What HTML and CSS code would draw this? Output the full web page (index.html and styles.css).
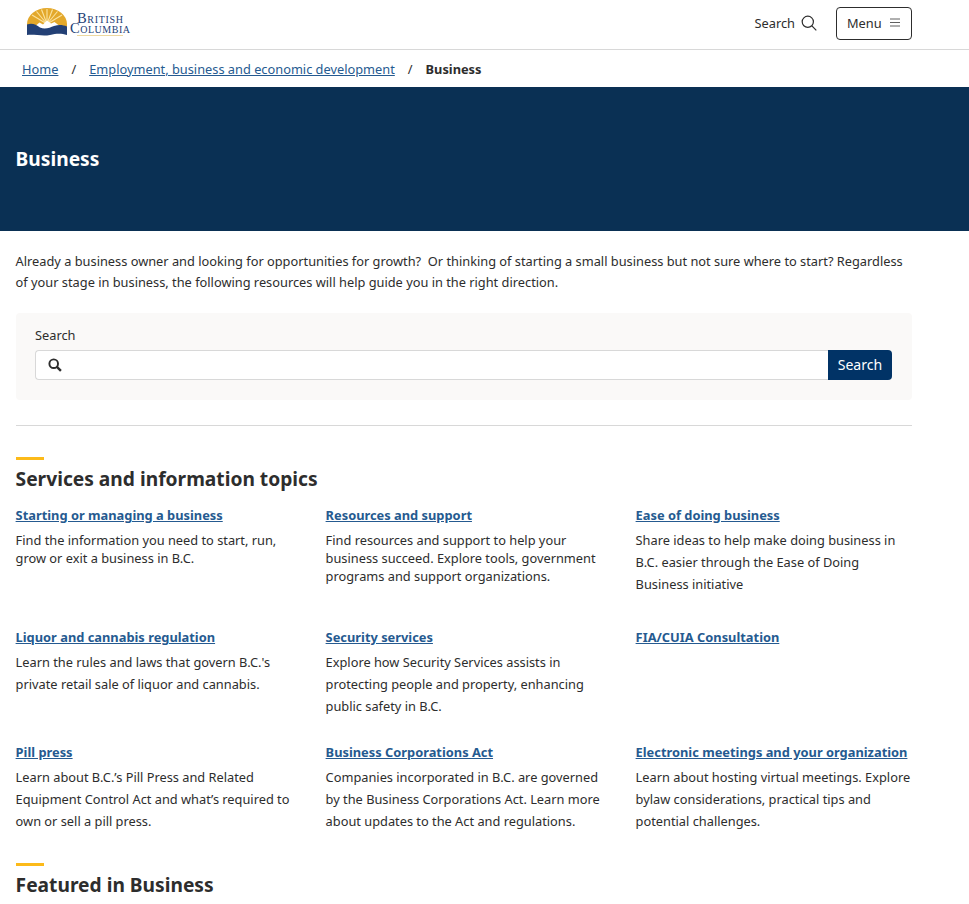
FILE: index.html
```html
<!DOCTYPE html>
<html lang="en">
<head>
  <meta charset="UTF-8" />
  <meta name="viewport" content="width=device-width, initial-scale=1.0"/>
  <title>Business</title>
  <link rel="stylesheet" href="styles.css">
</head>
<body>

<header class="site-header">
  <a class="logo" href="#">
    <svg width="106" height="30" viewBox="0 0 106 30">
      <path d="M1 17A20 16 0 0 1 41 17L41 20L1 20Z" fill="#e3a82b"/>
      <g stroke="#fbe3a0" stroke-width="1.100">
        <path d="M21 17L21 2"/><path d="M21 17L15.500 2.500"/><path d="M21 17L26.500 2.500"/>
        <path d="M21 17L10.500 4.500"/><path d="M21 17L31.500 4.500"/><path d="M21 17L6 8"/><path d="M21 17L36 8"/>
      </g>
      <path d="M8 20L13.500 15.500L17 17.500L21 13.500L25 16.500L28.500 15L35 20L28 22L14 22Z" fill="#fff"/>
      <path d="M1 17.500C6 15.500 10 17.500 14 20.500C19 23 24 20.500 28 19C33 17.500 37 18 41 19.500L41 28C35 26 30 26.500 24 28C16 29.500 8 27 1 28Z" fill="#234075"/>
      <text class="logo-text" x="51" y="15.500" textLength="46">British</text>
      <text class="logo-text" x="44" y="26" textLength="60">Columbia</text>
      <path d="M51 28.500H97" stroke="#eed9a0" stroke-width="1"/>
    </svg>
  </a>
  <div class="header-actions">
    <a class="header-search" href="#">Search
      <svg width="16" height="16" viewBox="0 0 16 16" fill="none" stroke="#2d2d2d" stroke-width="1.200">
        <circle cx="6.800" cy="6.800" r="5.600"/>
        <path d="M10.900 10.900L15.300 15.300"/>
      </svg>
    </a>
    <button class="menu-btn">Menu
      <svg width="10" height="9" viewBox="0 0 10 9" stroke="#606060" stroke-width="1">
        <path d="M0 1H10M0 4.500H10M0 8H10"/>
      </svg>
    </button>
  </div>
</header>

<nav class="breadcrumb">
  <a href="#">Home</a>
  <span class="sep">/</span>
  <a href="#">Employment, business and economic development</a>
  <span class="sep">/</span>
  <strong>Business</strong>
</nav>

<div class="hero">
  <h1>Business</h1>
</div>

<main class="content">
  <p class="intro">Already a business owner and looking for opportunities for growth?&nbsp; Or thinking of starting a small business but not sure where to start? Regardless of your stage in business, the following resources will help guide you in the right direction.</p>

  <form class="search-box">
    <label for="q">Search</label>
    <div class="search-row">
      <div class="search-input">
        <svg width="14" height="14" viewBox="0 0 13 13" fill="none" stroke="#2d2d2d">
          <circle cx="5.300" cy="5.300" r="4" stroke-width="1.800"/>
          <path d="M8.300 8.300L12 12" stroke-width="2.200"/>
        </svg>
        <input id="q" type="text">
      </div>
      <button type="button" class="search-btn">Search</button>
    </div>
  </form>

  <hr class="divider">

  <h2 class="section-title">Services and information topics</h2>

  <div class="topics">
    <div class="topic row-1">
      <a href="#">Starting or managing a business</a>
      <p class="tight">Find the information you need to start, run, grow or exit a business in B.C.</p>
    </div>
    <div class="topic row-1">
      <a href="#">Resources and support</a>
      <p class="tight">Find resources and support to help your business succeed. Explore tools, government programs and support organizations.</p>
    </div>
    <div class="topic row-1">
      <a href="#">Ease of doing business</a>
      <p>Share ideas to help make doing business in B.C. easier through the Ease of Doing Business initiative</p>
    </div>
    <div class="topic row-2">
      <a href="#">Liquor and cannabis regulation</a>
      <p>Learn the rules and laws that govern B.C.'s private retail sale of liquor and cannabis.</p>
    </div>
    <div class="topic row-2">
      <a href="#">Security services</a>
      <p>Explore how Security Services assists in protecting people and property, enhancing public safety in B.C.</p>
    </div>
    <div class="topic row-2">
      <a href="#">FIA/CUIA Consultation</a>
    </div>
    <div class="topic row-3">
      <a href="#">Pill press</a>
      <p>Learn about B.C.’s Pill Press and Related Equipment Control Act and what’s required to own or sell a pill press.</p>
    </div>
    <div class="topic row-3">
      <a href="#">Business Corporations Act</a>
      <p>Companies incorporated in B.C. are governed by the Business Corporations Act. Learn more about updates to the Act and regulations.</p>
    </div>
    <div class="topic row-3">
      <a href="#">Electronic meetings and your organization</a>
      <p>Learn about hosting virtual meetings. Explore bylaw considerations, practical tips and potential challenges.</p>
    </div>
  </div>

  <h2 class="section-title">Featured in Business</h2>
</main>

</body>
</html>
```

FILE: styles.css
```css
* {
  box-sizing: border-box;
}

body {
  margin: 0;
  font-family: "Noto Sans", sans-serif;
  font-size: 12.8px;
  color: #2d2d2d;
  background: #fff;
  overflow-x: hidden;
}

a {
  color: #255a90;
}

.site-header {
  height: 50px;
  width: 969px;
  padding: 7px 57px 0 26px;
  display: flex;
  justify-content: space-between;
  border-bottom: 1px solid #d8d8d8;
}

.logo {
  display: block;
  height: 30px;
  text-decoration: none;
}

.logo-text {
  font-family: "Liberation Serif", serif;
  font-size: 14.500px;
  font-variant: small-caps;
  fill: #234075;
}

.header-actions {
  display: flex;
  align-items: flex-start;
  gap: 19px;
}

.header-search {
  display: flex;
  align-items: center;
  gap: 6px;
  height: 32px;
  color: #2d2d2d;
  text-decoration: none;
}

.menu-btn {
  display: flex;
  align-items: center;
  gap: 8px;
  width: 76px;
  height: 33px;
  padding: 0 0 2px 10px;
  font: inherit;
  color: #2d2d2d;
  background: #fff;
  border: 1px solid #2d2d2d;
  border-radius: 4px;
}

.breadcrumb {
  height: 37px;
  padding-left: 22px;
  display: flex;
  align-items: center;
}

.breadcrumb .sep {
  margin: 0 13px;
}

.breadcrumb strong {
  font-weight: 700;
}

.hero {
  height: 144px;
  padding: 0 0 2px 15.600px;
  display: flex;
  align-items: center;
  background: #0a3054;
}

.hero h1 {
  margin: 0;
  font-size: 19.200px;
  font-weight: 700;
  color: #fff;
}

.content {
  width: 912px;
  padding: 20px 0 0 15.600px;
}

.intro {
  margin: 0 0 20px;
  line-height: 21px;
}

.search-box {
  height: 87px;
  padding: 13px 20px 0 19.400px;
  background: #faf9f8;
  border-radius: 4px;
}

.search-box label {
  display: block;
  height: 24px;
  line-height: 18px;
}

.search-row {
  display: flex;
  height: 30px;
}

.search-input {
  flex: 1;
  display: flex;
  align-items: center;
  gap: 8px;
  padding-left: 12px;
  background: #fff;
  border: 1px solid #d8d8d8;
  border-right: none;
  border-radius: 4px 0 0 4px;
}

.search-input input {
  flex: 1;
  border: none;
  outline: none;
  background: none;
}

.search-btn {
  width: 64px;
  padding: 0 0 2px;
  font: inherit;
  font-size: 14.100px;
  color: #fff;
  background: #013366;
  border: none;
  border-radius: 0 4px 4px 0;
}

.divider {
  margin: 25px 0 31px;
  border: none;
  border-top: 1px solid #d8d8d8;
}

.section-title {
  margin: 0;
  padding-top: 9px;
  font-size: 19.200px;
  line-height: 26px;
  font-weight: 700;
  position: relative;
}

.section-title::before {
  content: "";
  display: block;
  position: absolute;
  top: 0;
  left: 0;
  width: 28px;
  height: 3px;
  background: #fcba19;
}

.topics {
  display: grid;
  grid-template-columns: repeat(3, 277px);
  column-gap: 33px;
  margin-top: 14px;
}

.topic {
  height: 115px;
}

.topic.row-1 {
  height: 122px;
}

.topic.row-3 {
  height: 120px;
}

.topic a {
  display: block;
  font-size: 12.850px;
  font-weight: 700;
  line-height: 18px;
}

.topic p {
  margin: 5px 0 0;
  line-height: 22px;
}

.topic p.tight {
  margin-top: 7px;
  line-height: 18px;
}
```
